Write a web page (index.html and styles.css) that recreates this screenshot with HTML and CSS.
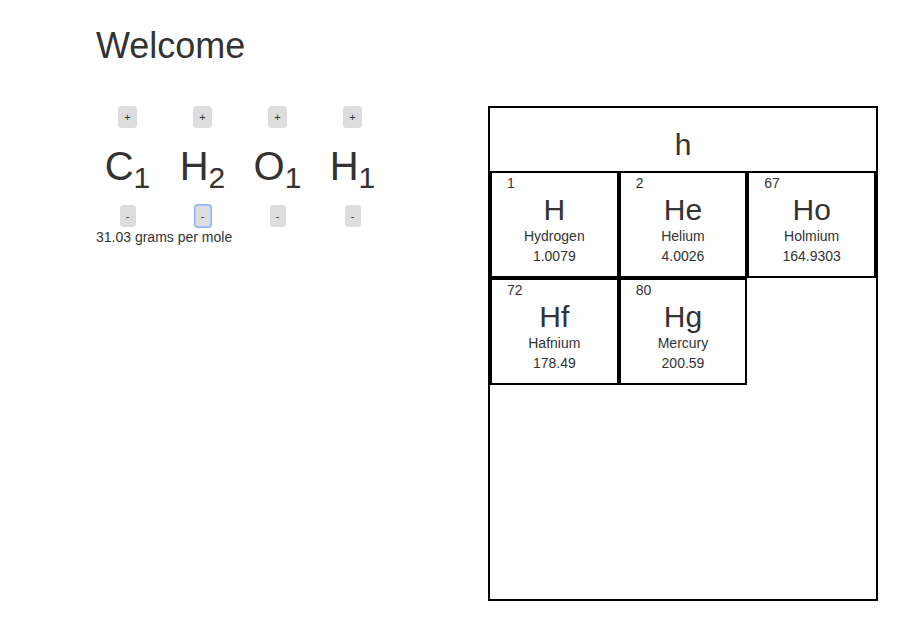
FILE: index.html
```
<!DOCTYPE html>
<html lang="en">
<head>
<meta charset="utf-8">
<title>Welcome</title>
<link rel="stylesheet" href="styles.css">
</head>
<body>
<main class="page">
  <h1>Welcome</h1>
  <div class="columns">
    <section class="formula">
      <div class="atoms">
        <div class="atom"><button type="button" aria-label="Add carbon">+</button><div class="atom-symbol">C<sub>1</sub></div><button type="button" aria-label="Remove carbon">-</button></div>
        <div class="atom"><button type="button" aria-label="Add hydrogen">+</button><div class="atom-symbol">H<sub>2</sub></div><button type="button" class="active" aria-label="Remove hydrogen">-</button></div>
        <div class="atom"><button type="button" aria-label="Add oxygen">+</button><div class="atom-symbol">O<sub>1</sub></div><button type="button" aria-label="Remove oxygen">-</button></div>
        <div class="atom"><button type="button" aria-label="Add hydrogen">+</button><div class="atom-symbol">H<sub>1</sub></div><button type="button" aria-label="Remove hydrogen">-</button></div>
      </div>
      <p class="mass">31.03 grams per mole</p>
    </section>
    <section class="picker">
      <input class="search" type="text" value="h" aria-label="Search elements">
      <div class="elements">
        <article class="element"><span class="number">1</span><h2>H</h2><p>Hydrogen</p><p>1.0079</p></article>
        <article class="element"><span class="number">2</span><h2>He</h2><p>Helium</p><p>4.0026</p></article>
        <article class="element"><span class="number">67</span><h2>Ho</h2><p>Holmium</p><p>164.9303</p></article>
        <article class="element"><span class="number">72</span><h2>Hf</h2><p>Hafnium</p><p>178.49</p></article>
        <article class="element"><span class="number">80</span><h2>Hg</h2><p>Mercury</p><p>200.59</p></article>
      </div>
    </section>
  </div>
</main>
</body>
</html>
```
FILE: styles.css
```
* {
  box-sizing: border-box;
}

body {
  margin: 0;
  background: #fff;
  color: #333;
  font: 14px/20px "Liberation Sans", Arial, sans-serif;
}

.page {
  padding: 26px 36px 32px 96px;
}

h1 {
  margin: 0;
  font-size: 36px;
  line-height: 40px;
  font-weight: 400;
}

.columns {
  display: grid;
  grid-template-columns: 1fr 1fr;
  align-items: start;
  padding-top: 40px;
}

.atoms {
  display: flex;
}

.atom {
  display: flex;
  flex-direction: column;
  align-items: center;
  width: 63px;
  margin-right: 12px;
}

.atom button {
  min-width: 16px;
  height: 22px;
  padding: 0 5px;
  border: 1px solid #ddd;
  border-radius: 3px;
  background: #ddd;
  color: #333;
  font: 11px/20px "Liberation Sans", Arial, sans-serif;
}

.atom button.active {
  border-color: #a6c6f8;
  box-shadow: 0 0 0 1px #8ab4f8;
}

.atom-symbol {
  margin: 8px 0 9px;
  font-size: 40px;
  line-height: 60px;
}

.atom-symbol sub {
  position: relative;
  bottom: -8px;
  font-size: 30px;
  line-height: 0;
  vertical-align: baseline;
}

.mass {
  margin: 0;
}

.picker {
  min-height: 495px;
  margin-left: 1px;
  border: 2px solid #000;
}

.search {
  display: block;
  width: 100%;
  height: 63px;
  padding: 10px 0 0;
  border: 0;
  outline: 0;
  background: transparent;
  color: #333;
  text-align: center;
  font: 30px/33px "Liberation Sans", Arial, sans-serif;
}

.elements {
  display: grid;
  grid-template-columns: repeat(3, 1fr);
}

.element {
  height: 107px;
  border: 2px solid #000;
  text-align: center;
}

.number {
  display: block;
  padding-left: 15px;
  text-align: left;
}

h2 {
  margin: 0;
  font-size: 30px;
  line-height: 33px;
  font-weight: 400;
}

.element p {
  margin: 0;
}
```
